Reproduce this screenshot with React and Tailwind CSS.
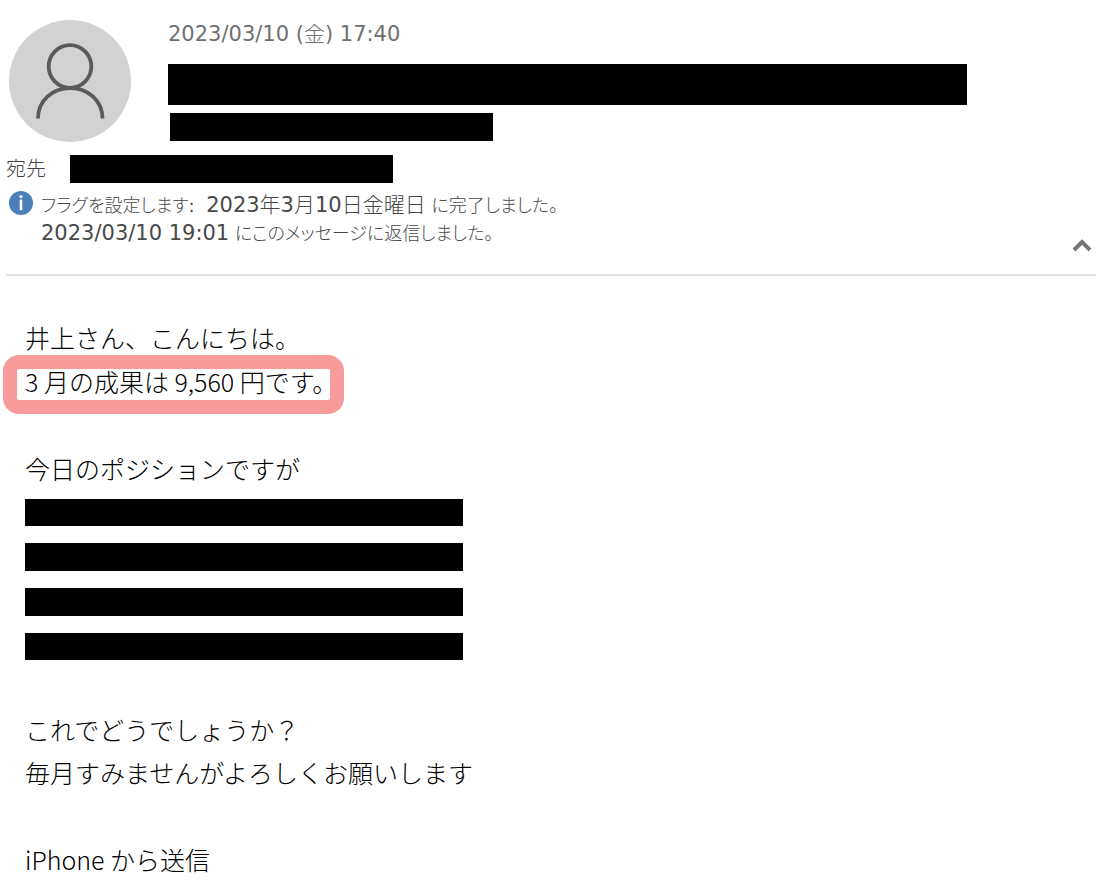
// 黒塗りの行(高さはそれぞれ少しだけ違う)
const positionRows = [
  { id: 1, className: 'h-[27px]' },
  { id: 2, className: 'h-7' },
  { id: 3, className: 'h-7' },
  { id: 4, className: 'h-[27px]' },
];

// 差出人のアバター
const Avatar = () => (
  <svg className="h-[122px] w-[122px] shrink-0" viewBox="0 0 122 122" fill="none" aria-hidden="true">
    <circle cx="61" cy="61" r="61" fill="#d2d2d2" />
    <g stroke="#5a5a5a" strokeWidth="3.8">
      <circle cx="61" cy="46.500" r="21.300" />
      <path d="M29 98.500C29 80.500 43.300 68.200 61.200 68.200S93.500 80.500 93.500 98.500" />
    </g>
  </svg>
);

// 青い情報アイコン
const InfoIcon = () => (
  <svg className="h-6 w-6 shrink-0" viewBox="0 0 24 24" aria-hidden="true">
    <circle cx="12" cy="12" r="12" fill="#4a7fb8" />
    <circle cx="12" cy="5.600" r="1.600" fill="#fff" />
    <rect x="10.700" y="8.600" width="2.600" height="10.600" fill="#fff" />
  </svg>
);

// 数字は標準の太さ、和文は細字で表示する
const Num = ({ children }) => <span className="font-normal">{children}</span>;

const MessageHeader = () => (
  <header className="border-b-2 border-[#e3e3e3] pt-5 font-['DejaVu_Sans','Noto_Sans_CJK_JP',sans-serif] text-[20px] font-light text-[#444444]">
    <div className="flex gap-[37px] pl-[3px]">
      <Avatar />
      <div className="min-w-0 flex-1">
        <time dateTime="2023-03-10T17:40" className="block h-11 text-[21px] leading-7 text-[#707070]">
          <Num>2023/03/10 (</Num>金<Num>) 17:40</Num>
        </time>
        <div className="h-[41px] max-w-[799px] bg-black" />
        <div className="mt-2 ml-0.5 h-7 max-w-[323px] bg-black" />
      </div>
    </div>

    <div className="mt-[13px] flex items-center gap-6">
      <span className="w-10 leading-7">宛先</span>
      <div className="h-7 w-full max-w-[323px] bg-black" />
    </div>

    <div className="mt-2 flex items-start gap-2 pl-[3px]">
      <InfoIcon />
      <div className="flex-1 text-[18px] text-[#484848] [font-feature-settings:'palt']">
        <p className="h-7 leading-7">
          フラグを設定します<Num>:</Num>&nbsp;{' '}
          <span className="text-[21px]">
            <Num>2023</Num>年<Num>3</Num>月<Num>10</Num>日金曜日
          </span>{' '}
          に完了しました。
        </p>
        <p className="h-7 leading-7">
          <span className="text-[21px]">
            <Num>2023/03/10 19:01</Num>
          </span>{' '}
          にこのメッセージに返信しました。
        </p>
      </div>
      <button type="button" aria-label="ヘッダーを折りたたむ" className="mt-[46px] mb-[21px] cursor-pointer">
        <svg className="h-4 w-7" viewBox="0 0 28 16" fill="none" aria-hidden="true">
          <path d="M6 13L14 5L22 13" stroke="#777777" strokeWidth="4" />
        </svg>
      </button>
    </div>
  </header>
);

const MessageBody = () => (
  <article className="pt-12 font-['Noto_Sans_CJK_JP',sans-serif] text-[25px] leading-[43px] font-light text-black">
    <p className="px-[22px] pb-1 leading-[27px]">井上さん、こんにちは。</p>
    {/* 成果の行を赤枠で強調 */}
    <p className="w-[341px] rounded-2xl border-[14px] border-[#f79b9b] pb-[6px] pl-2 leading-[25px] whitespace-nowrap">
      3 月の成果は 9,560 円です。
    </p>
    <p className="mt-[33px] px-[22px]">今日のポジションですが</p>
    <div className="mt-[9px] flex flex-col gap-[17px] px-[22px]">
      {positionRows.map((row) => (
        <div key={row.id} className={`max-w-[438px] bg-black ${row.className}`} />
      ))}
    </div>
    <p className="mt-12 px-[22px]">これでどうでしょうか？</p>
    <p className="px-[22px]">毎月すみませんがよろしくお願いします</p>
    <p className="mt-11 px-[22px]">iPhone から送信</p>
  </article>
);

export default function App() {
  return (
    <main className="min-h-screen bg-white">
      <div className="pr-5 pl-1.5">
        <MessageHeader />
      </div>
      <div className="pl-[3px]">
        <MessageBody />
      </div>
    </main>
  );
}
